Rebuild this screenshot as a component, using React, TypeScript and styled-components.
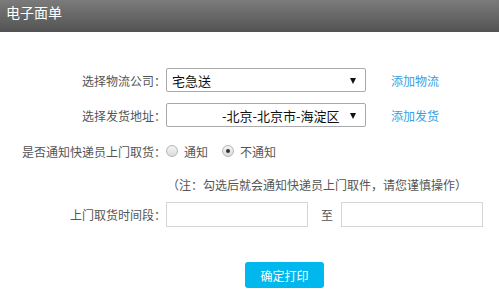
import { createGlobalStyle, styled } from 'styled-components';

const GlobalStyle = createGlobalStyle`
  html, body {
    margin: 0;
    padding: 0;
    background: #fff;
  }
  body {
    font-family: 'Noto Sans CJK SC', 'Liberation Sans', sans-serif;
    font-size: 12px;
    color: #555;
  }
`;

const Panel = styled.div`
  width: 499px;
  height: 308px;
  overflow: hidden;
`;

const Header = styled.div`
  height: 32px;
  box-sizing: border-box;
  padding: 3px 6px 0;
  background: linear-gradient(#7b7b7b, #535353);
  color: #fff;
  font-size: 14px;
  line-height: 18px;
`;

const Form = styled.div`
  display: flex;
  flex-direction: column;
  padding-top: 36px;
`;

const Row = styled.div<{ $top?: number; $gap?: number; $height?: number }>`
  display: flex;
  align-items: center;
  height: ${({ $height }) => $height ?? 24}px;
  margin-top: ${({ $top }) => $top ?? 0}px;
  margin-bottom: ${({ $gap }) => $gap ?? 0}px;
`;

const Label = styled.div`
  width: 166px;
  flex-shrink: 0;
  text-align: right;
  white-space: nowrap;
  color: #555;
`;

const SelectWrap = styled.div`
  position: relative;
  width: 200px;
  height: 24px;
`;

const Select = styled.select<{ $indent?: number }>`
  appearance: none;
  width: 100%;
  height: 100%;
  box-sizing: border-box;
  margin: 0;
  padding: 0 20px 0 ${({ $indent }) => $indent ?? 5}px;
  border: 1px solid #a9a9a9;
  border-radius: 2px;
  background: #fff;
  font-family: inherit;
  font-size: 13px;
  color: #111;
  outline: none;
`;

const Arrow = styled.span`
  position: absolute;
  right: 10px;
  top: 10px;
  width: 0;
  height: 0;
  border-left: 3px solid transparent;
  border-right: 3px solid transparent;
  border-top: 6px solid #111;
  pointer-events: none;
`;

const Link = styled.a`
  margin-left: 25px;
  color: #3a9ee0;
  text-decoration: none;
  cursor: pointer;
`;

const RadioItem = styled.label`
  display: flex;
  align-items: center;
  gap: 6px;
  margin-right: 14px;
  color: #555;
  cursor: pointer;
`;

const RadioDot = styled.span<{ $checked?: boolean }>`
  position: relative;
  width: 12px;
  height: 12px;
  box-sizing: border-box;
  border: 1px solid #b5b5b5;
  border-radius: 50%;
  background: linear-gradient(#f4f4f4, #dcdcdc);
  &::after {
    content: '';
    display: ${({ $checked }) => ($checked ? 'block' : 'none')};
    position: absolute;
    left: 3px;
    top: 3px;
    width: 4px;
    height: 4px;
    border-radius: 50%;
    background: #333;
  }
`;

const Note = styled.div`
  padding-left: 167px;
  color: #555;
  line-height: 16px;
`;

const TextInput = styled.input`
  width: 142px;
  height: 25px;
  box-sizing: border-box;
  margin: 0;
  border: 1px solid #d6d6d6;
  background: #fff;
  outline: none;
`;

const To = styled.span`
  margin: 0 8px 0 13px;
  color: #555;
`;

const Submit = styled.button`
  margin: 35px 0 0 245px;
  width: 79px;
  height: 26px;
  border: none;
  border-radius: 3px;
  background: #00b7ee;
  color: #fff;
  font-family: inherit;
  font-size: 12px;
  cursor: pointer;
`;

const App = () => {
  return (
    <Panel>
      <GlobalStyle />
      <Header>电子面单</Header>
      <Form>
        <Row $gap={11}>
          <Label>选择物流公司：</Label>
          <SelectWrap>
            <Select defaultValue='zjs'>
              <option value='zjs'>宅急送</option>
            </Select>
            <Arrow />
          </SelectWrap>
          <Link>添加物流</Link>
        </Row>
        <Row $gap={12}>
          <Label>选择发货地址：</Label>
          <SelectWrap>
            <Select $indent={55} defaultValue='addr'>
              <option value='addr'>-北京-北京市-海淀区</option>
            </Select>
            <Arrow />
          </SelectWrap>
          <Link>添加发货</Link>
        </Row>
        <Row $gap={14}>
          <Label>是否通知快递员上门取货：</Label>
          <RadioItem>
            <RadioDot />
            通知
          </RadioItem>
          <RadioItem>
            <RadioDot $checked />
            不通知
          </RadioItem>
        </Row>
        <Note>（注：勾选后就会通知快递员上门取件，请您谨慎操作）</Note>
        <Row $height={25} $top={9}>
          <Label>上门取货时间段：</Label>
          <TextInput />
          <To>至</To>
          <TextInput />
        </Row>
        <Submit>确定打印</Submit>
      </Form>
    </Panel>
  );
};

export default App;
